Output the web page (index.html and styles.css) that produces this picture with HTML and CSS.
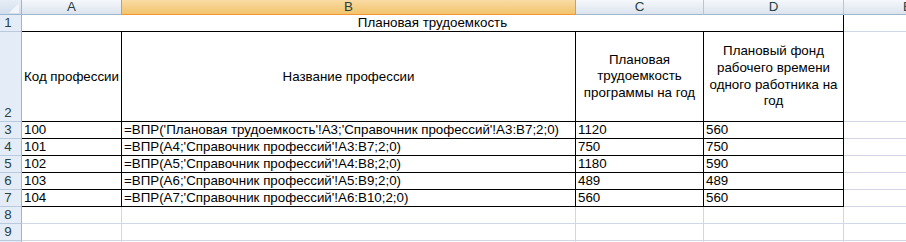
FILE: index.html
```html
<!DOCTYPE html>
<html lang="ru">
<head>
    <meta charset="UTF-8">
    <meta name="viewport" content="width=device-width, initial-scale=1.0">
    <title>Плановая трудоемкость</title>
    <link rel="stylesheet" href="styles.css">
</head>
<body>
    <div class="sheet">
        <!-- column headers -->
        <div class="corner">
            <svg width="10" height="10" viewBox="0 0 10 10"><polygon points="10,0 10,10 0,10" fill="#f1f4f8"/></svg>
        </div>
        <div class="colhead">A</div>
        <div class="colhead sel">B</div>
        <div class="colhead">C</div>
        <div class="colhead">D</div>
        <div class="colhead">E</div>

        <!-- row 1 -->
        <div class="rowhead">1</div>
        <div class="cell title center">Плановая трудоемкость</div>
        <div class="cell"></div>

        <!-- row 2 -->
        <div class="rowhead">2</div>
        <div class="cell b mid">Код профессии</div>
        <div class="cell b mid center">Название профессии</div>
        <div class="cell b mid center wrap">Плановая<br>трудоемкость<br>программы на год</div>
        <div class="cell b mid center wrap">Плановый фонд<br>рабочего времени<br>одного работника на<br>год</div>
        <div class="cell"></div>

        <!-- rows 3-7 -->
        <div class="rowhead">3</div>
        <div class="cell b">100</div>
        <div class="cell b">=ВПР('Плановая трудоемкость'!A3;'Справочник профессий'!A3:B7;2;0)</div>
        <div class="cell b">1120</div>
        <div class="cell b">560</div>
        <div class="cell"></div>

        <div class="rowhead">4</div>
        <div class="cell b">101</div>
        <div class="cell b">=ВПР(A4;'Справочник профессий'!A3:B7;2;0)</div>
        <div class="cell b">750</div>
        <div class="cell b">750</div>
        <div class="cell"></div>

        <div class="rowhead">5</div>
        <div class="cell b">102</div>
        <div class="cell b">=ВПР(A5;'Справочник профессий'!A4:B8;2;0)</div>
        <div class="cell b">1180</div>
        <div class="cell b">590</div>
        <div class="cell"></div>

        <div class="rowhead">6</div>
        <div class="cell b">103</div>
        <div class="cell b">=ВПР(A6;'Справочник профессий'!A5:B9;2;0)</div>
        <div class="cell b">489</div>
        <div class="cell b">489</div>
        <div class="cell"></div>

        <div class="rowhead">7</div>
        <div class="cell b">104</div>
        <div class="cell b">=ВПР(A7;'Справочник профессий'!A6:B10;2;0)</div>
        <div class="cell b">560</div>
        <div class="cell b">560</div>
        <div class="cell"></div>

        <!-- empty rows -->
        <div class="rowhead">8</div>
        <div class="cell"></div>
        <div class="cell"></div>
        <div class="cell"></div>
        <div class="cell"></div>
        <div class="cell"></div>

        <div class="rowhead">9</div>
        <div class="cell"></div>
        <div class="cell"></div>
        <div class="cell"></div>
        <div class="cell"></div>
        <div class="cell"></div>

        <div class="rowhead">10</div>
        <div class="cell"></div>
        <div class="cell"></div>
        <div class="cell"></div>
        <div class="cell"></div>
        <div class="cell"></div>
    </div>
</body>
</html>
```

FILE: styles.css
```css
body {
    margin: 0;
    background-color: #fff;
    overflow: hidden;
    font-family: "Liberation Sans", Arial, sans-serif;
    font-size: 13.33px;
    color: #000;
}
.sheet {
    display: grid;
    grid-template-columns: 22px 100px 454px 128px 140px 128px;
    grid-template-rows: 15px 17px 90px repeat(8, 17px);
    width: 972px;
}
.sheet > div {
    box-sizing: border-box;
}
.corner {
    display: flex;
    justify-content: flex-end;
    align-items: flex-end;
    padding: 0 2px 1px 0;
    background: linear-gradient(#e6edf6, #d3deec);
    border-right: 1px solid #9eb6ce;
    border-bottom: 1px solid #9eb6ce;
}
.corner svg {
    display: block;
}
.colhead {
    display: flex;
    justify-content: center;
    align-items: center;
    line-height: 14px;
    color: #27413e;
    background: linear-gradient(#f5f8fc, #dce3ed);
    border-right: 1px solid #b4c6da;
    border-bottom: 1px solid #9eb6ce;
}
.colhead.sel {
    background: linear-gradient(#f9dba4, #f2c46c);
    border-right: 1px solid #f29536;
    border-bottom: 1px solid #f29536;
    box-shadow: -1px 0 0 #f29536;
}
.rowhead {
    display: flex;
    justify-content: center;
    align-items: flex-end;
    padding-right: 5px;
    line-height: 16px;
    color: #27413e;
    background-color: #e4ecf7;
    border-right: 1px solid #9eb6ce;
    border-bottom: 1px solid #b9cadd;
}
.cell {
    display: flex;
    align-items: flex-end;
    padding: 0 2px;
    line-height: 16px;
    white-space: nowrap;
    overflow: hidden;
    border-right: 1px solid #d0d7e5;
    border-bottom: 1px solid #d0d7e5;
}
.cell.b {
    border-right-color: #000;
    border-bottom-color: #000;
}
.title {
    grid-column: 2 / 6;
    border-right-color: #000;
    border-bottom-color: #000;
}
.mid {
    align-items: center;
}
.center {
    justify-content: center;
    text-align: center;
}
.wrap {
    line-height: 16.6px;
    white-space: normal;
}
```
